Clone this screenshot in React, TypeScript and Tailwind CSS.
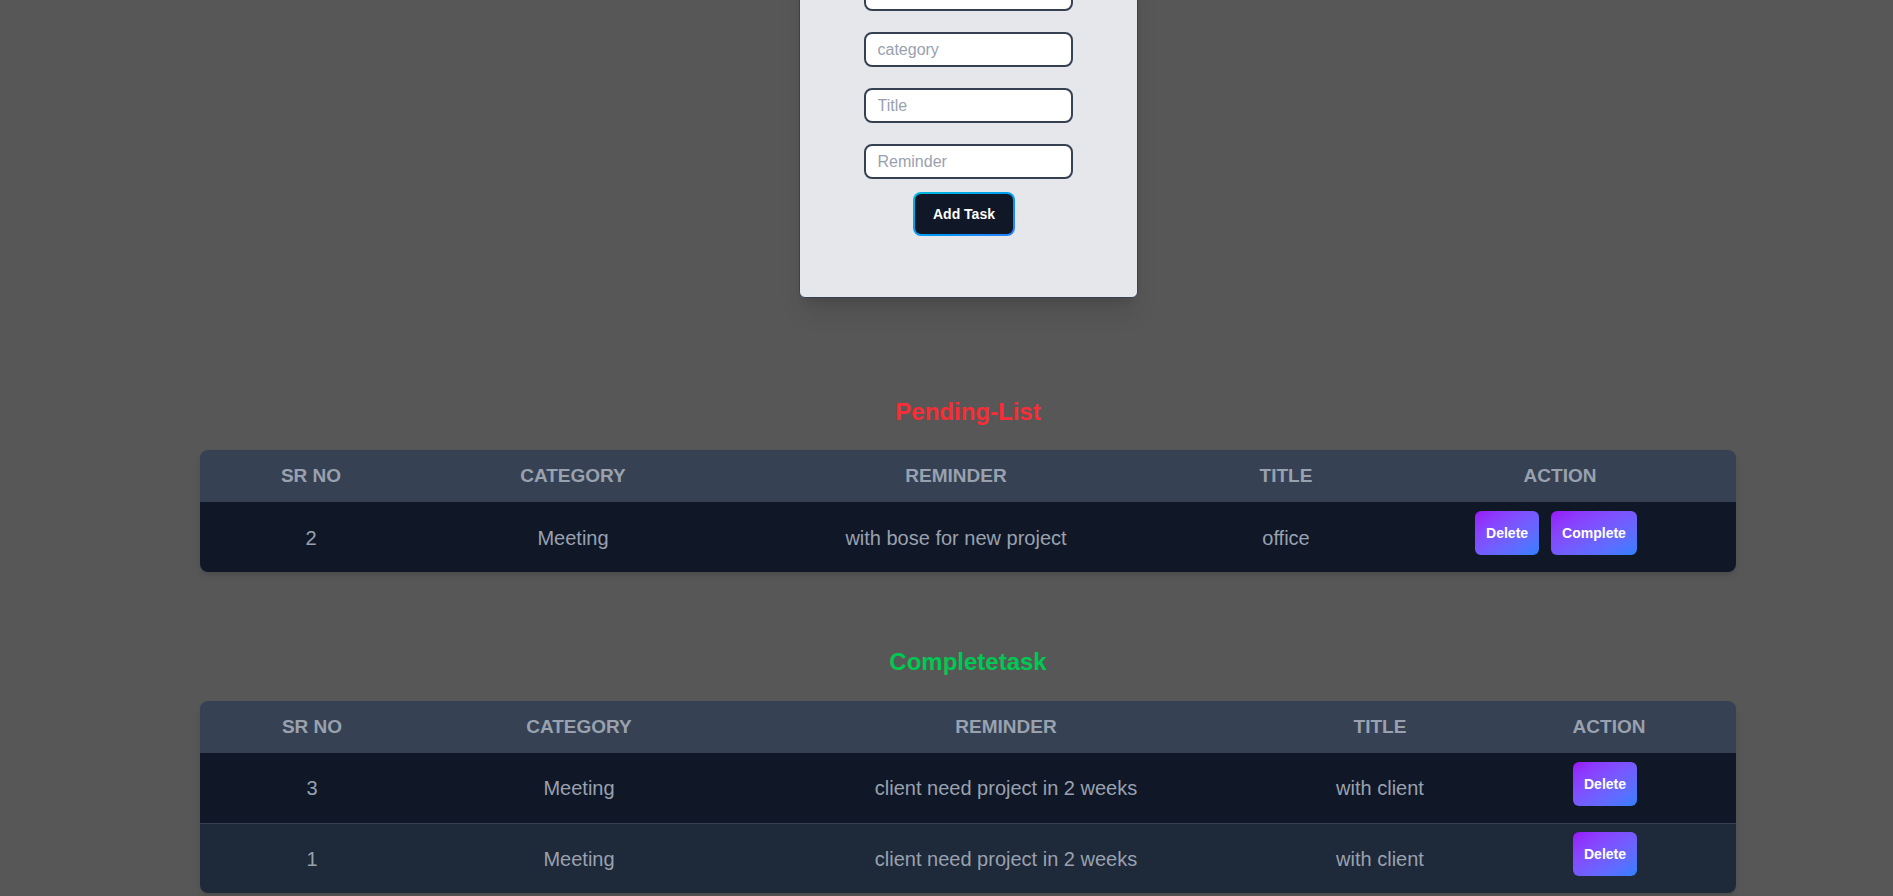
import { useState } from 'react';

type Task = { id: number; category: string; reminder: string; title: string };

const pending: Task[] = [
  { id: 2, category: 'Meeting', reminder: 'with bose for new project', title: 'office' },
];

const completed: Task[] = [
  { id: 3, category: 'Meeting', reminder: 'client need project in 2 weeks', title: 'with client' },
  { id: 1, category: 'Meeting', reminder: 'client need project in 2 weeks', title: 'with client' },
];

function GradientButton({ label }: { label: string }) {
  return (
    <button
      type="button"
      className="h-[44px] rounded-md bg-linear-to-br from-purple-600 to-blue-500 px-[11px] text-sm font-bold text-white"
    >
      {label}
    </button>
  );
}

function TaskTable({
  rows,
  widths,
  withComplete,
}: {
  rows: Task[];
  widths: string[];
  withComplete?: boolean;
}) {
  const heads = ['Sr No', 'Category', 'Reminder', 'Title', 'Action'];
  return (
    <div className="w-[1536px] overflow-hidden rounded-lg shadow-md">
      <table className="w-full table-fixed text-center">
        <thead className="bg-gray-700 text-[19px] font-bold uppercase text-gray-400">
          <tr>
            {heads.map((h, i) => (
              <th key={h} className={`h-[52px] ${widths[i]}`}>
                {h}
              </th>
            ))}
          </tr>
        </thead>
        <tbody className="text-xl text-gray-400">
          {rows.map((t, i) => (
            <tr
              key={t.id}
              className={`${i % 2 === 0 ? 'bg-gray-900' : 'bg-gray-800'} border-b border-gray-700 last:border-b-0`}
            >
              <td className="h-[70px] pt-px">{t.id}</td>
              <td className="pt-px">{t.category}</td>
              <td className="pt-px">{t.reminder}</td>
              <td className="pt-px">{t.title}</td>
              <td>
                <div className="flex justify-center gap-3 pb-2 pr-2">
                  <GradientButton label="Delete" />
                  {withComplete && <GradientButton label="Complete" />}
                </div>
              </td>
            </tr>
          ))}
        </tbody>
      </table>
    </div>
  );
}

export default function App() {
  const [form, setForm] = useState({ sr: '', category: '', title: '', reminder: '' });

  return (
    <div className="min-h-screen overflow-hidden bg-[#575757] font-['Liberation_Sans',Arial,sans-serif]">
      <div className="flex flex-col items-center pl-[43px]">
        <div className="-mt-[44px] flex w-[339px] flex-col items-center rounded-md border border-gray-700 bg-gray-200 pb-[53px] pt-[19px] shadow-xl">
          <div className="flex flex-col gap-[21px]">
            {(
              [
                ['sr', 'Sr No'],
                ['category', 'category'],
                ['title', 'Title'],
                ['reminder', 'Reminder'],
              ] as const
            ).map(([key, ph]) => (
              <input
                key={key}
                placeholder={ph}
                value={form[key]}
                onChange={(e) => setForm({ ...form, [key]: e.target.value })}
                className="h-[35px] w-[209px] rounded-lg border-2 border-gray-700 bg-white px-3 text-base text-gray-900 placeholder:text-gray-400 focus:outline-none"
              />
            ))}
          </div>
          <button
            type="button"
            className="mb-2 mr-2 mt-[13px] h-[44px] w-[102px] rounded-lg bg-linear-to-br from-cyan-500 to-blue-500 p-0.5"
          >
            <span className="flex h-full w-full items-center justify-center rounded-md bg-gray-900 text-sm font-bold text-white">
              Add Task
            </span>
          </button>
        </div>

        <h2 className="mt-[98px] text-2xl leading-8 font-bold text-red-500">Pending-List</h2>
        <div className="mt-[22px]">
          <TaskTable
            rows={pending}
            withComplete
            widths={['w-[222px]', 'w-[302px]', 'w-[464px]', 'w-[196px]', 'w-[352px]']}
          />
        </div>

        <h2 className="mt-[74px] text-2xl leading-8 font-bold text-green-500">Completetask</h2>
        <div className="mt-[23px]">
          <TaskTable
            rows={completed}
            widths={['w-[224px]', 'w-[310px]', 'w-[544px]', 'w-[204px]', 'w-[254px]']}
          />
        </div>
      </div>
    </div>
  );
}
